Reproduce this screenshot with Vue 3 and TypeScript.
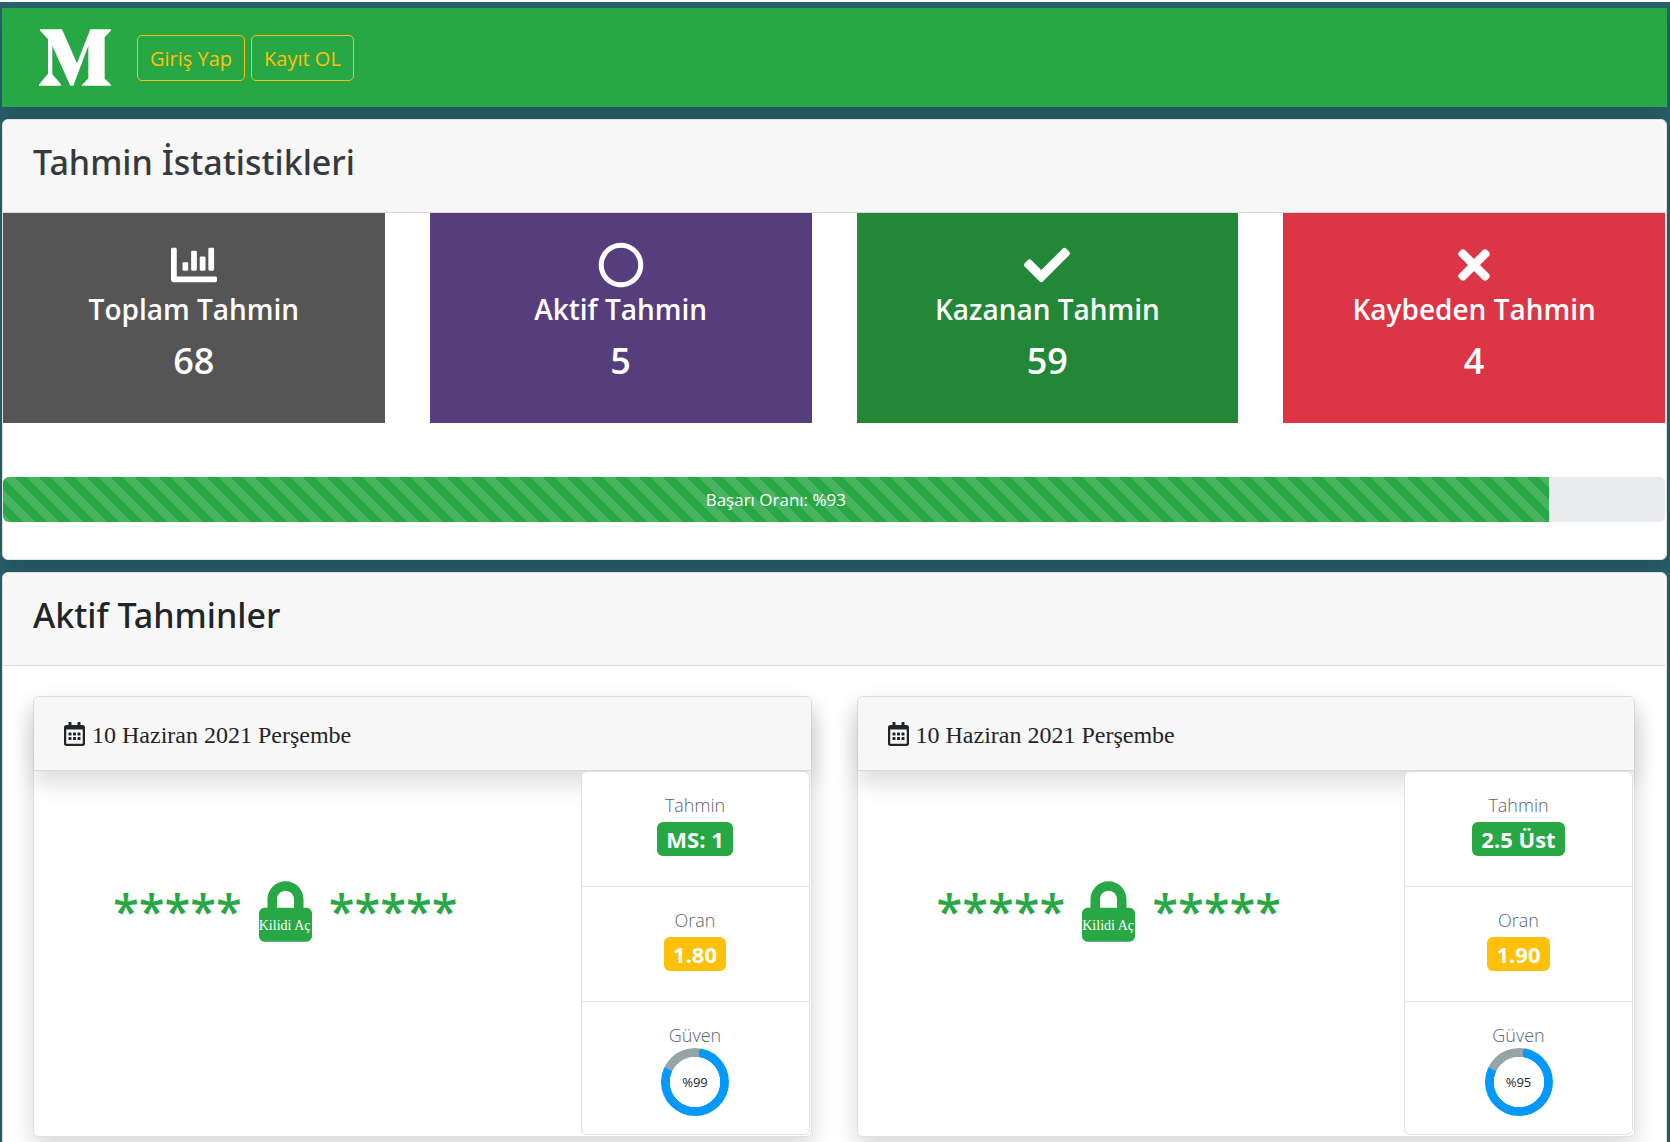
<script setup lang="ts">
interface Stat {
  label: string
  value: number
  tone: string
  viewBox: string
  width: number
  path: string
}

interface Prediction {
  id: number
  date: string
  pick: string
  odds: string
  confidence: string
}

const stats: Stat[] = [
  {
    label: 'Toplam Tahmin',
    value: 68,
    tone: 'total',
    viewBox: '0 0 512 512',
    width: 46,
    path: 'M332.8 320h38.4c6.4 0 12.8-6.4 12.8-12.8V172.8c0-6.4-6.4-12.8-12.8-12.8h-38.4c-6.4 0-12.8 6.4-12.8 12.8v134.4c0 6.4 6.4 12.8 12.8 12.8zm96 0h38.4c6.4 0 12.8-6.4 12.8-12.8V76.8c0-6.4-6.4-12.8-12.8-12.8h-38.4c-6.4 0-12.8 6.4-12.8 12.8v230.4c0 6.4 6.4 12.8 12.8 12.8zm-288 0h38.4c6.4 0 12.8-6.4 12.8-12.8v-70.4c0-6.4-6.4-12.8-12.8-12.8h-38.4c-6.4 0-12.8 6.4-12.8 12.8v70.4c0 6.4 6.4 12.8 12.8 12.8zm96 0h38.4c6.4 0 12.8-6.4 12.8-12.8V108.8c0-6.4-6.4-12.8-12.8-12.8h-38.4c-6.4 0-12.8 6.4-12.8 12.8v198.4c0 6.4 6.4 12.8 12.8 12.8zM496 384H64V80c0-8.84-7.16-16-16-16H16C7.16 64 0 71.16 0 80v336c0 17.67 14.33 32 32 32h464c8.84 0 16-7.16 16-16v-32c0-8.84-7.16-16-16-16z',
  },
  {
    label: 'Aktif Tahmin',
    value: 5,
    tone: 'active',
    viewBox: '0 0 512 512',
    width: 46,
    path: 'M256 8C119 8 8 119 8 256s111 248 248 248 248-111 248-248S393 8 256 8zm0 440c-106 0-192-86-192-192S150 64 256 64s192 86 192 192-86 192-192 192z',
  },
  {
    label: 'Kazanan Tahmin',
    value: 59,
    tone: 'won',
    viewBox: '0 0 512 512',
    width: 46,
    path: 'M173.898 439.404l-166.4-166.4c-9.997-9.997-9.997-26.206 0-36.204l36.203-36.204c9.997-9.998 26.207-9.998 36.204 0L192 312.69 432.095 72.596c9.997-9.997 26.207-9.997 36.204 0l36.203 36.204c9.997 9.997 9.997 26.206 0 36.204l-294.4 294.401c-9.998 9.997-26.207 9.997-36.204-.001z',
  },
  {
    label: 'Kaybeden Tahmin',
    value: 4,
    tone: 'lost',
    viewBox: '0 0 352 512',
    width: 32,
    path: 'M242.72 256l100.07-100.07c12.28-12.28 12.28-32.19 0-44.48l-22.24-22.24c-12.28-12.28-32.19-12.28-44.48 0L176 189.28 75.93 89.21c-12.28-12.28-32.19-12.28-44.48 0L9.21 111.45c-12.28 12.28-12.28 32.19 0 44.48L109.28 256 9.21 356.07c-12.28 12.28-12.28 32.19 0 44.48l22.24 22.24c12.28 12.28 32.2 12.28 44.48 0L176 322.72l100.07 100.07c12.28 12.28 32.2 12.28 44.48 0l22.24-22.24c12.28-12.28 12.28-32.19 0-44.48L242.72 256z',
  },
]

const successRate = 93

const predictions: Prediction[] = [
  { id: 1, date: '10 Haziran 2021 Perşembe', pick: 'MS: 1', odds: '1.80', confidence: '%99' },
  { id: 2, date: '10 Haziran 2021 Perşembe', pick: '2.5 Üst', odds: '1.90', confidence: '%95' },
]
</script>

<template>
  <div class="page">
    <nav class="navbar">
      <a class="brand" href="#" aria-label="Ana sayfa">
        <svg width="72" height="57" viewBox="0 0 216 170" fill="#fff" aria-hidden="true">
          <path d="M3 0h66l45 102L154 0h62v4l-19 20v124l19 19v3h-87v-3l19-19V50l-45 120h-9L40 50v85l26 30v5H0v-4l27-32V30L3 4z" />
        </svg>
      </a>
      <div class="nav-actions">
        <button type="button">Giriş Yap</button>
        <button type="button">Kayıt OL</button>
      </div>
    </nav>

    <section class="card">
      <header class="card-header"><h2 class="soft">Tahmin İstatistikleri</h2></header>
      <div class="stats">
        <article v-for="stat in stats" :key="stat.tone" class="stat" :class="stat.tone">
          <svg :width="stat.width" height="46" :viewBox="stat.viewBox" fill="currentColor" aria-hidden="true">
            <path :d="stat.path" />
          </svg>
          <h3>{{ stat.label }}</h3>
          <p>{{ stat.value }}</p>
        </article>
      </div>
      <div class="progress" role="progressbar" :aria-valuenow="successRate" aria-valuemin="0" aria-valuemax="100">
        <div class="bar" :style="{ width: successRate + '%' }">Başarı Oranı: %{{ successRate }}</div>
      </div>
    </section>

    <section class="card">
      <header class="card-header"><h2>Aktif Tahminler</h2></header>
      <div class="predictions">
        <article v-for="item in predictions" :key="item.id" class="prediction">
          <header class="date">
            <svg width="21" height="24" viewBox="0 0 448 512" fill="currentColor" aria-hidden="true">
              <path d="M148 288h-40c-6.6 0-12-5.4-12-12v-40c0-6.6 5.4-12 12-12h40c6.6 0 12 5.4 12 12v40c0 6.6-5.4 12-12 12zm108-12v-40c0-6.6-5.4-12-12-12h-40c-6.6 0-12 5.4-12 12v40c0 6.6 5.4 12 12 12h40c6.6 0 12-5.4 12-12zm96 0v-40c0-6.6-5.4-12-12-12h-40c-6.6 0-12 5.4-12 12v40c0 6.6 5.4 12 12 12h40c6.6 0 12-5.4 12-12zm-96 96v-40c0-6.6-5.4-12-12-12h-40c-6.6 0-12 5.4-12 12v40c0 6.6 5.4 12 12 12h40c6.6 0 12-5.4 12-12zm-96 0v-40c0-6.6-5.4-12-12-12h-40c-6.6 0-12 5.4-12 12v40c0 6.6 5.4 12 12 12h40c6.6 0 12-5.4 12-12zm192 0v-40c0-6.6-5.4-12-12-12h-40c-6.6 0-12 5.4-12 12v40c0 6.6 5.4 12 12 12h40c6.6 0 12-5.4 12-12zm96-260v352c0 26.5-21.5 48-48 48H48c-26.5 0-48-21.5-48-48V112c0-26.5 21.5-48 48-48h48V12c0-6.6 5.4-12 12-12h40c6.6 0 12 5.4 12 12v52h128V12c0-6.6 5.4-12 12-12h40c6.6 0 12 5.4 12 12v52h48c26.5 0 48 21.5 48 48zm-48 346V160H48v298c0 3.3 2.7 6 6 6h340c3.3 0 6-2.7 6-6z" />
            </svg>
            <span>{{ item.date }}</span>
          </header>
          <div class="prediction-body">
            <div class="match">
              <span class="stars">*****</span>
              <button type="button" class="unlock">
                <svg width="53" height="61" viewBox="0 0 448 512" fill="currentColor" aria-hidden="true">
                  <path d="M400 224h-24v-72C376 68.2 307.8 0 224 0S72 68.2 72 152v72H48c-26.5 0-48 21.5-48 48v192c0 26.5 21.5 48 48 48h352c26.5 0 48-21.5 48-48V272c0-26.5-21.5-48-48-48zm-104 0H152v-72c0-39.7 32.3-72 72-72s72 32.3 72 72v72z" />
                </svg>
                <span class="unlock-label">Kilidi Aç</span>
              </button>
              <span class="stars">*****</span>
            </div>
            <ul class="details">
              <li>
                <span class="caption">Tahmin</span>
                <strong class="badge green">{{ item.pick }}</strong>
              </li>
              <li>
                <span class="caption">Oran</span>
                <strong class="badge amber">{{ item.odds }}</strong>
              </li>
              <li>
                <span class="caption">Güven</span>
                <div class="ring"><span>{{ item.confidence }}</span></div>
              </li>
            </ul>
          </div>
        </article>
      </div>
    </section>
  </div>
</template>

<style>
body {
  background: #275e69;
}
</style>

<style scoped>
* {
  box-sizing: border-box;
}

.page {
  height: 100vh;
  overflow: hidden;
  padding: 6px 3px 0 2px;
  border-top: 2px solid #fff;
  background: #29616d;
  color: #212529;
  font-family: "Open Sans", "Noto Sans", sans-serif;
  font-size: 18px;
}

h2,
h3,
p,
ul {
  margin: 0;
  padding: 0;
}

.navbar {
  display: flex;
  align-items: center;
  gap: 26px;
  height: 99px;
  padding: 0 37px;
  background: #28a745;
  box-shadow: 0 12px 24px rgba(0, 0, 0, 0.15);
}

.brand svg {
  display: block;
}

.nav-actions {
  display: flex;
  gap: 6px;
}

.nav-actions button {
  height: 46px;
  padding: 2px 12px 0;
  border: 1px solid #ffc107;
  border-radius: 5px;
  background: transparent;
  color: #ffc107;
  font: inherit;
  font-size: 20px;
}

.card {
  margin-top: 12px;
  padding-right: 1px;
  border: 1px solid #dfdfdf;
  border-radius: 6px;
  background: #fff;
  box-shadow: 0 12px 24px rgba(0, 0, 0, 0.15);
}

.card-header {
  height: 93px;
  padding: 17px 30px;
  border-bottom: 1px solid #d8d8d8;
  border-radius: 5px 5px 0 0;
  background: #f7f7f7;
}

h2 {
  font-family: "Noto Sans", "Open Sans", sans-serif;
  font-size: 34px;
  font-weight: 500;
  line-height: 50px;
}

.soft {
  color: #343a40;
}

.stats {
  display: grid;
  grid-template-columns: repeat(4, 1fr);
  gap: 45px;
}

.stat {
  display: flex;
  flex-direction: column;
  align-items: center;
  height: 210px;
  padding-top: 29px;
  color: #fff;
}

.total { background: #555; }
.active { background: #563d7c; }
.won { background: #228838; }
.lost { background: #dc3545; }

h3 {
  font-size: 28px;
  font-weight: 600;
  line-height: 42px;
}

.stat p {
  margin-top: 7px;
  font-size: 36px;
  font-weight: 600;
  line-height: 48px;
}

.progress {
  height: 45px;
  margin: 54px 0 37px;
  overflow: hidden;
  border-radius: 6px;
  background: #e9ecef;
}

.bar {
  height: 100%;
  background-color: #28a745;
  background-image: linear-gradient(45deg, rgba(255, 255, 255, 0.15) 25%, transparent 25%, transparent 50%, rgba(255, 255, 255, 0.15) 50%, rgba(255, 255, 255, 0.15) 75%, transparent 75%, transparent);
  background-size: 24px 24px;
  color: #fff;
  font-size: 17px;
  line-height: 45px;
  text-align: center;
}

.predictions {
  display: grid;
  grid-template-columns: repeat(2, 1fr);
  gap: 45px;
  padding: 30px;
}

.prediction {
  border: 1px solid #dfdfdf;
  border-radius: 6px;
  box-shadow: 0 12px 24px rgba(0, 0, 0, 0.15);
}

.date {
  display: flex;
  align-items: center;
  gap: 7px;
  height: 74px;
  padding: 0 30px;
  border-bottom: 1px solid #d8d8d8;
  border-radius: 5px 5px 0 0;
  background: #f7f7f7;
  box-shadow: 0 12px 24px rgba(0, 0, 0, 0.15);
  font-family: "Liberation Serif", serif;
  font-size: 24px;
}

.date span {
  padding-top: 4px;
}

.prediction-body {
  display: grid;
  grid-template-columns: 1fr 229px;
  padding: 0 1px 1px 0;
}

.match {
  display: flex;
  align-items: flex-start;
  padding: 110px 0 0 79px;
  gap: 17px;
  color: #28a745;
}

.stars {
  font-size: 47px;
  font-weight: 600;
  line-height: 60px;
}

.unlock {
  position: relative;
  padding: 0;
  border: 0;
  background: none;
  color: inherit;
}

.unlock svg {
  display: block;
}

.unlock-label {
  position: absolute;
  bottom: 8px;
  left: 0;
  color: #fff;
  font-family: "Liberation Serif", serif;
  font-size: 14px;
  line-height: 16px;
  white-space: nowrap;
}

.details {
  position: relative;
  border: 1px solid #dfdfdf;
  border-radius: 6px;
  background: #fff;
  list-style: none;
}

.details li {
  display: flex;
  flex-direction: column;
  align-items: center;
  height: 115px;
  padding-top: 20px;
  border-bottom: 1px solid #dfdfdf;
}

.details li:last-child {
  height: 132px;
  border-bottom: 0;
}

.caption {
  color: #5c656d;
  font-weight: 300;
  line-height: 26px;
}

.badge {
  margin-top: 4px;
  padding: 0 9px;
  border-radius: 6px;
  color: #fff;
  font-size: 22px;
  font-weight: 700;
  line-height: 34px;
}

.green { background: #28a745; }
.amber { background: #ffc107; }

.ring {
  display: grid;
  place-items: center;
  width: 68px;
  height: 68px;
  border-radius: 50%;
  background: radial-gradient(closest-side, #fff 73%, transparent 75%), conic-gradient(#95a5a6 8deg, #0398fe 8deg 296deg, #95a5a6 296deg);
  font-size: 13px;
}
</style>
